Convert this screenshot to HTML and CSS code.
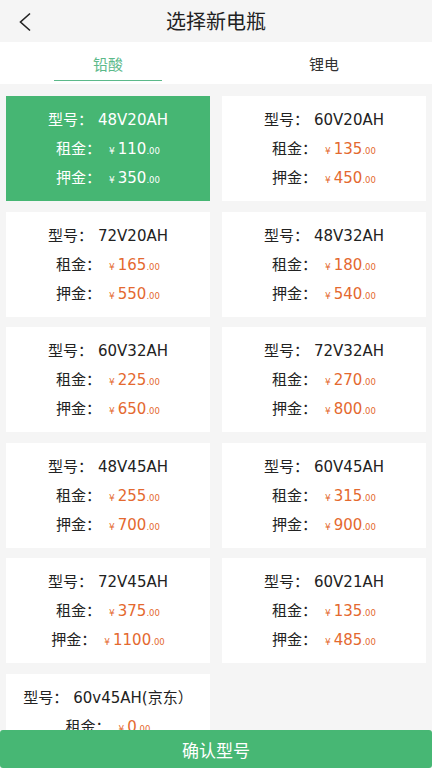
FILE: index.html
```html
<!DOCTYPE html>
<html lang="zh-CN">
<head>
    <meta charset="UTF-8">
    <meta name="viewport" content="width=device-width, initial-scale=1.0">
    <title>选择新电瓶</title>
    <link rel="stylesheet" href="styles.css">
</head>
<body>
    <div class="page">
        <header class="topbar">
            <span class="back">
                <svg width="14" height="20" viewBox="0 0 14 20"><path d="M12 1.5 L2.5 10 L12 18.5" fill="none" stroke="#222" stroke-width="1.6"/></svg>
            </span>
            <h1 class="title">选择新电瓶</h1>
        </header>

        <nav class="tabs">
            <div class="tab active">铅酸</div>
            <div class="tab">锂电</div>
        </nav>

        <div class="list">
            <div class="grid">
                <div class="card selected">
                    <p>型号：<span class="model">48V20AH</span></p>
                    <p>租金：<span class="price"><small>¥</small>110<i>.00</i></span></p>
                    <p>押金：<span class="price"><small>¥</small>350<i>.00</i></span></p>
                </div>
                <div class="card">
                    <p>型号：<span class="model">60V20AH</span></p>
                    <p>租金：<span class="price"><small>¥</small>135<i>.00</i></span></p>
                    <p>押金：<span class="price"><small>¥</small>450<i>.00</i></span></p>
                </div>
                <div class="card">
                    <p>型号：<span class="model">72V20AH</span></p>
                    <p>租金：<span class="price"><small>¥</small>165<i>.00</i></span></p>
                    <p>押金：<span class="price"><small>¥</small>550<i>.00</i></span></p>
                </div>
                <div class="card">
                    <p>型号：<span class="model">48V32AH</span></p>
                    <p>租金：<span class="price"><small>¥</small>180<i>.00</i></span></p>
                    <p>押金：<span class="price"><small>¥</small>540<i>.00</i></span></p>
                </div>
                <div class="card">
                    <p>型号：<span class="model">60V32AH</span></p>
                    <p>租金：<span class="price"><small>¥</small>225<i>.00</i></span></p>
                    <p>押金：<span class="price"><small>¥</small>650<i>.00</i></span></p>
                </div>
                <div class="card">
                    <p>型号：<span class="model">72V32AH</span></p>
                    <p>租金：<span class="price"><small>¥</small>270<i>.00</i></span></p>
                    <p>押金：<span class="price"><small>¥</small>800<i>.00</i></span></p>
                </div>
                <div class="card">
                    <p>型号：<span class="model">48V45AH</span></p>
                    <p>租金：<span class="price"><small>¥</small>255<i>.00</i></span></p>
                    <p>押金：<span class="price"><small>¥</small>700<i>.00</i></span></p>
                </div>
                <div class="card">
                    <p>型号：<span class="model">60V45AH</span></p>
                    <p>租金：<span class="price"><small>¥</small>315<i>.00</i></span></p>
                    <p>押金：<span class="price"><small>¥</small>900<i>.00</i></span></p>
                </div>
                <div class="card">
                    <p>型号：<span class="model">72V45AH</span></p>
                    <p>租金：<span class="price"><small>¥</small>375<i>.00</i></span></p>
                    <p>押金：<span class="price"><small>¥</small>1100<i>.00</i></span></p>
                </div>
                <div class="card">
                    <p>型号：<span class="model">60V21AH</span></p>
                    <p>租金：<span class="price"><small>¥</small>135<i>.00</i></span></p>
                    <p>押金：<span class="price"><small>¥</small>485<i>.00</i></span></p>
                </div>
                <div class="card">
                    <p>型号：<span class="model">60v45AH(京东）</span></p>
                    <p>租金：<span class="price"><small>¥</small>0<i>.00</i></span></p>
                    <p>押金：<span class="price"><small>¥</small>0<i>.00</i></span></p>
                </div>
            </div>
        </div>

        <button class="confirm" type="button">确认型号</button>
    </div>
</body>
</html>
```

FILE: styles.css
```css
/* battery picker page */
* {
    box-sizing: border-box;
}

body {
    margin: 0;
    font-family: "Noto Sans CJK SC", "Noto Sans", sans-serif;
    background-color: #f5f5f5;
    color: #222;
}

.page {
    height: 768px;
    display: flex;
    flex-direction: column;
    overflow: hidden;
}

.topbar {
    height: 42px;
    display: flex;
    align-items: center;
    justify-content: center;
    position: relative;
    background: #f5f5f5;
}

.back {
    position: absolute;
    left: 18px;
    top: 12px;
    display: flex;
}

.title {
    margin: 0 0 2px;
    font-size: 20px;
    font-weight: 400;
    color: #222;
}

.tabs {
    height: 42px;
    display: flex;
    background: #fff;
}

.tab {
    flex: 1;
    display: flex;
    align-items: center;
    justify-content: center;
    font-size: 15px;
    color: #333;
    position: relative;
}

.tab.active {
    color: #5cb98a;
}

.tab.active::after {
    content: "";
    position: absolute;
    left: 54px;
    right: 54px;
    bottom: 3px;
    height: 1px;
    background: #5cb98a;
}

.list {
    flex: 1;
    overflow: hidden;
    padding: 12px 6px 0;
}

.grid {
    display: grid;
    grid-template-columns: 1fr 1fr;
    column-gap: 12px;
    row-gap: 10.5px;
}

.card {
    background: #fff;
    padding: 10px 0 0;
    text-align: center;
    height: 105px;
}

.card p {
    margin: 0;
    height: 29px;
    line-height: 29px;
    font-family: "DejaVu Sans", "Noto Sans CJK SC", sans-serif;
    font-size: 15px;
    color: #222;
}

.model {
    margin-left: 5px;
}

.price {
    color: #e4692f;
    font-size: 15px;
    line-height: 1;
    margin-left: 8px;
}

.price small {
    font-size: 9px;
    margin-right: 3px;
}

.price i {
    font-style: normal;
    font-size: 8.5px;
}

.card.selected {
    background: #46b673;
}

.card.selected p,
.card.selected .price {
    color: #fff;
}

.confirm {
    position: fixed;
    left: 0;
    right: 0;
    bottom: 0;
    height: 38px;
    border: none;
    border-radius: 3px;
    background: #47b774;
    color: #fff;
    font-family: inherit;
    font-size: 17px;
    cursor: pointer;
}
```
